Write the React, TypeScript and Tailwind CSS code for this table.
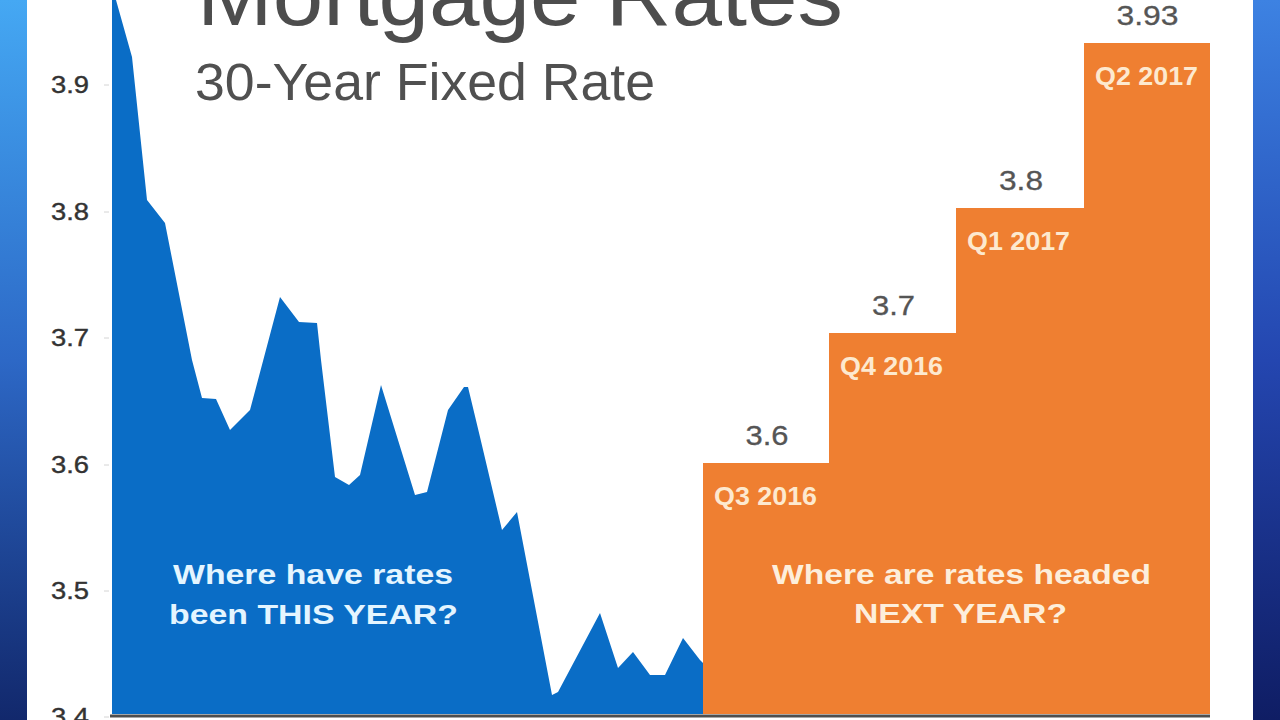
const FONT = '"Liberation Sans", Arial, sans-serif';

// y position of each axis value (3.9 ... 3.4)
const axis = [
  { label: '3.9', y: 85 },
  { label: '3.8', y: 212 },
  { label: '3.7', y: 338 },
  { label: '3.6', y: 465 },
  { label: '3.5', y: 591 },
  { label: '3.4', y: 717 },
];

const bars = [
  { x: 703, w: 127, top: 463, value: '3.6', valueW: 43, quarter: 'Q3 2016' },
  { x: 829, w: 128, top: 333, value: '3.7', valueW: 43, quarter: 'Q4 2016' },
  { x: 956, w: 129, top: 208, value: '3.8', valueW: 44, quarter: 'Q1 2017' },
  { x: 1084, w: 126, top: 43, value: '3.93', valueW: 62, quarter: 'Q2 2017' },
];

const history =
  'M112,714 L112,-5 L116,0 L132,57 L147,200 L165,223 L192,360 L202,398 L216,399 L230,430 L250,410 ' +
  'L280,297 L299,322 L317,323 L321,360 L335,477 L349,485 L360,475 L381,385 L415,495 L427,492 ' +
  'L448,410 L464,387 L468,387 L480,437 L502,530 L517,512 L552,695 L558,692 L600,613 L618,668 ' +
  'L633,652 L650,675 L665,675 L683,638 L700,660 L704,664 L704,714 Z';

function RatesChart() {
  return (
    <svg viewBox="27 0 1226 720" className="block h-full w-full" style={{ fontFamily: FONT }}>
      {/* title */}
      <text x={197} y={25} fontSize={86} fill="#4d4d4d" textLength={646} lengthAdjust="spacingAndGlyphs">
        Mortgage Rates
      </text>
      <text x={195} y={100} fontSize={51} fill="#505050" textLength={460} lengthAdjust="spacingAndGlyphs">
        30-Year Fixed Rate
      </text>

      {/* y axis */}
      {axis.map((a) => (
        <g key={a.label}>
          <text
            x={51}
            y={a.y + 8}
            fontSize={23}
            fill="#333333"
            stroke="#333333"
            strokeWidth={0.4}
            textLength={38}
            lengthAdjust="spacingAndGlyphs"
          >
            {a.label}
          </text>
          <line x1={104} x2={109} y1={a.y} y2={a.y} stroke="#d4d4d4" strokeWidth={1} />
        </g>
      ))}

      {/* this year */}
      <path d={history} fill="#0a6dc6" />

      {/* forecast steps */}
      {bars.map((b) => (
        <g key={b.quarter}>
          <rect x={b.x} y={b.top} width={b.w} height={714 - b.top} fill="#ef7f31" />
          <text
            x={b.x + b.w / 2 + 0.5 - b.valueW / 2}
            y={b.top - 18}
            fontSize={28}
            fill="#555555"
            stroke="#555555"
            strokeWidth={0.3}
            textLength={b.valueW}
            lengthAdjust="spacingAndGlyphs"
          >
            {b.value}
          </text>
          <text
            x={b.x + 11}
            y={b.top + 42}
            fontSize={26}
            fontWeight={700}
            fill="#fde9cf"
            textLength={103}
            lengthAdjust="spacingAndGlyphs"
          >
            {b.quarter}
          </text>
        </g>
      ))}

      {/* x axis */}
      <line x1={110} x2={1210} y1={716} y2={716} stroke="#4e4e4e" strokeWidth={3} />

      {/* captions */}
      <g fontSize={28} fontWeight={700}>
        <text x={173} y={584} fill="#e4f5ff" textLength={280} lengthAdjust="spacingAndGlyphs">
          Where have rates
        </text>
        <text x={169} y={624} fill="#e4f5ff" textLength={289} lengthAdjust="spacingAndGlyphs">
          been THIS YEAR?
        </text>
        <text x={772} y={584} fill="#fdeedb" textLength={379} lengthAdjust="spacingAndGlyphs">
          Where are rates headed
        </text>
        <text x={854} y={623} fill="#fdeedb" textLength={213} lengthAdjust="spacingAndGlyphs">
          NEXT YEAR?
        </text>
      </g>
    </svg>
  );
}

export default function App() {
  return (
    <div className="flex h-[720px] w-full overflow-hidden bg-white">
      <div className="w-[27px] shrink-0 bg-linear-to-b from-[#45a8f3] via-[#2d68c6] to-[#12286c]" />
      <div className="relative min-w-0 flex-1 bg-white">
        <RatesChart />
      </div>
      <div className="w-[27px] shrink-0 bg-linear-to-b from-[#3d82e2] via-[#2446b0] to-[#0f1d64]" />
    </div>
  );
}
